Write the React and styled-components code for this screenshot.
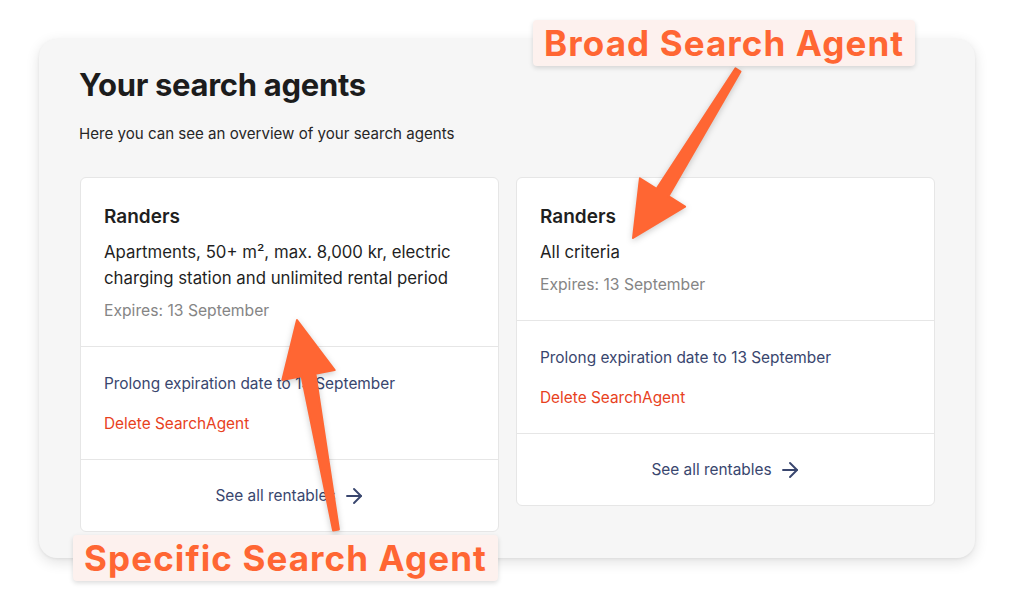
import styled, { createGlobalStyle } from "styled-components";
import { ArrowRight } from "lucide-react";

const GlobalStyle = createGlobalStyle`
  html, body {
    margin: 0;
    padding: 0;
    background: #ffffff;
  }
  body {
    font-family: Inter, "Noto Sans", "Liberation Sans", sans-serif;
    color: #1f1f1f;
  }
`;

const agents = [
  {
    id: 1,
    city: "Randers",
    criteria: "Apartments, 50+ m², max. 8,000 kr, electric charging station and unlimited rental period",
    expires: "13 September",
  },
  {
    id: 2,
    city: "Randers",
    criteria: "All criteria",
    expires: "13 September",
  },
];

const App = () => {
  return (
    <Page>
      <GlobalStyle />
      <Panel>
        <Title>Your search agents</Title>
        <Subtitle>Here you can see an overview of your search agents</Subtitle>
        <CardGrid>
          {agents.map((agent) => (
            <Card key={agent.id}>
              <Section $top={25} $bottom={24}>
                <City>{agent.city}</City>
                <Criteria>{agent.criteria}</Criteria>
                <Expires>Expires: {agent.expires}</Expires>
              </Section>
              <Section $top={25} $bottom={23} $gap={16}>
                <LinkButton>Prolong expiration date to {agent.expires}</LinkButton>
                <LinkButton $danger>Delete SearchAgent</LinkButton>
              </Section>
              <Footer>
                <LinkButton $gap={6}>
                  See all rentables
                  <ArrowRight size={24} strokeWidth={1.9} />
                </LinkButton>
              </Footer>
            </Card>
          ))}
        </CardGrid>
      </Panel>

      <Arrows viewBox="0 0 1014 598" width="1014" height="598">
        <polygon points="735.5,68.4 740.5,71.6 668.4,196.2 685.1,206.6 633,238 639.9,178.3 656.6,188.8" />
        <polygon points="338.9,529.5 315.4,373.7 334.7,370.1 297,320 282.3,379.9 301.6,376.3 333.1,530.5" />
      </Arrows>

      <Label $top={20} $left={533}>Broad Search Agent</Label>
      <Label $top={535} $left={73}>Specific Search Agent</Label>
    </Page>
  );
};

export default App;

const Page = styled.div`
  position: relative;
  width: 1014px;
  height: 598px;
  padding: 39px 39px 0 39px;
  box-sizing: border-box;
  overflow: hidden;
`;

const Panel = styled.div`
  width: 936px;
  height: 519px;
  box-sizing: border-box;
  padding: 28px 41px 0 41px;
  background: #f6f6f6;
  border-radius: 18px;
  box-shadow: 0 4px 14px rgba(0, 0, 0, 0.12), 0 1px 3px rgba(0, 0, 0, 0.06);
`;

const Title = styled.h1`
  margin: 0 0 0 -1px;
  font-size: 31px;
  line-height: 36px;
  font-weight: 700;
  color: #1c1c1c;
  letter-spacing: -0.3px;
`;

const Subtitle = styled.p`
  margin: 19px 0 0 -1px;
  font-size: 15.1px;
  line-height: 24px;
  color: #262626;
`;

const CardGrid = styled.div`
  margin-top: 31px;
  display: grid;
  grid-template-columns: 419px 419px;
  gap: 17px;
  align-items: start;
`;

const Card = styled.div`
  background: #ffffff;
  border: 1px solid #e6e6e6;
  border-radius: 6px;
  display: flex;
  flex-direction: column;
`;

const Section = styled.div`
  padding: ${(p) => p.$top}px 24px ${(p) => p.$bottom}px 23px;
  display: flex;
  flex-direction: column;
  align-items: flex-start;
  gap: ${(p) => (p.$gap ? `${p.$gap}px` : "0")};
  border-bottom: 1px solid #e6e6e6;
`;

const City = styled.div`
  font-size: 19px;
  line-height: 28px;
  font-weight: 600;
  color: #1f1f1f;
  margin-bottom: 8px;
`;

const Criteria = styled.div`
  font-size: 16.8px;
  line-height: 26px;
  color: #1f1f1f;
  padding-right: 12px;
`;

const Expires = styled.div`
  margin-top: 9px;
  font-size: 15.7px;
  line-height: 22px;
  color: #858585;
`;

const LinkButton = styled.button`
  border: 0;
  background: none;
  padding: 0;
  font-family: inherit;
  font-size: 15.4px;
  line-height: 24px;
  color: ${(p) => (p.$danger ? "#e8411d" : "#39466e")};
  display: inline-flex;
  align-items: center;
  gap: ${(p) => (p.$gap ? `${p.$gap}px` : "4px")};
  cursor: pointer;
`;

const Footer = styled.div`
  padding: 24px 24px 23px 26px;
  display: flex;
  justify-content: center;
`;

const Arrows = styled.svg`
  position: absolute;
  top: 0;
  left: 0;
  pointer-events: none;
  filter: drop-shadow(0 2px 3px rgba(0, 0, 0, 0.2));

  polygon {
    fill: #ff6633;
    stroke: #ff6633;
    stroke-width: 2;
    stroke-linejoin: round;
  }
`;

const Label = styled.div`
  position: absolute;
  top: ${(p) => p.$top}px;
  left: ${(p) => p.$left}px;
  padding: 0 11px;
  height: 46px;
  display: flex;
  align-items: center;
  background: #fdf1ee;
  border-radius: 4px;
  box-shadow: 0 2px 5px rgba(0, 0, 0, 0.14);
  font-size: 35px;
  font-weight: 700;
  color: #ff6633;
  letter-spacing: 1.1px;
  white-space: nowrap;
`;
